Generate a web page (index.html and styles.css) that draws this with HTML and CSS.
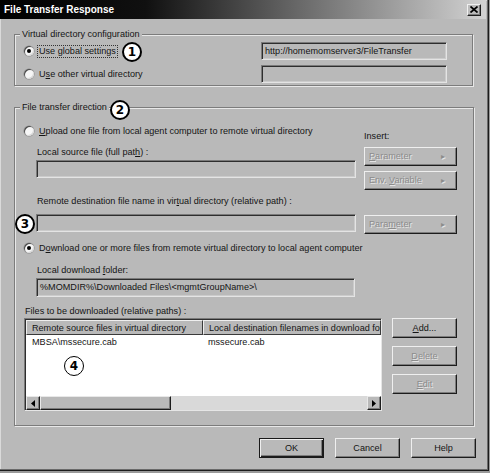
FILE: index.html
```html
<!DOCTYPE html>
<html>
<head>
<meta charset="utf-8">
<title>File Transfer Response</title>
<link rel="stylesheet" href="styles.css">
</head>
<body>
<div class="window">
  <div class="titlebar">
    <span class="title">File Transfer Response</span>
    <span class="close"><svg width="8" height="7" viewBox="0 0 8 7"><path d="M0.5 0.5 L7.5 6.5 M7.5 0.5 L0.5 6.5" stroke="#000" stroke-width="1.7"/></svg></span>
  </div>
  <div class="content">
    <fieldset class="group g1">
      <legend>Virtual directory configuration</legend>
      <div class="g1grid">
        <label class="radio checked"><span class="dot"></span><span class="focus">Use global settings</span></label>
        <div class="field">http://homemomserver3/FileTransfer</div>
        <label class="radio"><span class="dot"></span><span>U<u>s</u>e other virtual directory</span></label>
        <div class="field"></div>
      </div>
    </fieldset>

    <fieldset class="group g2">
      <legend>File transfer direction</legend>
      <div class="upper">
        <div class="leftcol">
          <label class="radio"><span class="dot"></span><span><u>U</u>pload one file from local agent computer to remote virtual directory</span></label>
          <div class="lbl l1">Local source file (full pat<u>h</u>) :</div>
          <div class="field f320"></div>
          <div class="lbl l2">Remote destination file name in vir<u>t</u>ual directory (relative path) :</div>
          <div class="field f320 f2"></div>
        </div>
        <div class="rightcol">
          <div class="lbl ins">Insert:</div>
          <div class="btn dis side p1"><span><u>P</u>arameter</span><span class="tri">&#9656;</span></div>
          <div class="btn dis side p2"><span>Env. <u>V</u>ariable</span><span class="tri">&#9656;</span></div>
          <div class="btn dis side p3"><span>Para<u>m</u>eter</span><span class="tri">&#9656;</span></div>
        </div>
      </div>
      <label class="radio checked dl"><span class="dot"></span><span>D<u>o</u>wnload one or more files from remote virtual directory to local agent computer</span></label>
      <div class="lbl l3">Local download <u>f</u>older:</div>
      <div class="field f319">%MOMDIR%\Downloaded Files\&lt;mgmtGroupName&gt;\</div>
      <div class="lbl l4">Files to be downloaded (relative paths) :</div>
      <div class="listrow">
        <div class="list">
          <div class="lhead">
            <div class="hc c1">Remote source files in virtual directory</div>
            <div class="hc c2">Local destination filenames in download folder</div>
          </div>
          <div class="lbody">
            <div class="lr"><span class="c1">MBSA\mssecure.cab</span><span class="c2">mssecure.cab</span></div>
          </div>
          <div class="hscroll">
            <span class="sarrow"><svg width="4" height="7" viewBox="0 0 4 7"><path d="M4 0 L0 3.5 L4 7 Z" fill="#000"/></svg></span>
            <span class="thumb"></span>
            <span class="track"></span>
            <span class="sarrow"><svg width="4" height="7" viewBox="0 0 4 7"><path d="M0 0 L4 3.5 L0 7 Z" fill="#000"/></svg></span>
          </div>
        </div>
        <div class="sidebtns">
          <div class="btn act"><span><u>A</u>dd...</span></div>
          <div class="btn dis"><span><u>D</u>elete</span></div>
          <div class="btn dis"><span><u>E</u>dit</span></div>
        </div>
      </div>
    </fieldset>

    <div class="footer">
      <div class="btn dflt">OK</div>
      <div class="btn">Cancel</div>
      <div class="btn">Help</div>
    </div>
  </div>

  <span class="callout k1">1</span>
  <span class="callout k2">2</span>
  <span class="callout k3">3</span>
  <span class="callout k4">4</span>
</div>
</body>
</html>
```

FILE: styles.css
```css
* { box-sizing: border-box; }
html, body { margin: 0; padding: 0; }
body {
  width: 490px;
  height: 473px;
  overflow: hidden;
  background: #9a9a9a;
  font-family: "Liberation Sans", Arial, sans-serif;
  font-size: 9.1px;
  line-height: 11px;
  color: #141414;
}
u { text-decoration: underline; text-underline-offset: 1px; }

.window {
  position: relative;
  width: 489px;
  height: 471px;
  background: #b9b9b9;
  box-shadow: inset -1px -1px 0 #1c1c1c, inset -2px -2px 0 #6a6a6a, inset 1px 1px 0 #dadada;
}

.titlebar {
  height: 19px;
  margin-right: 3px;
  padding: 0 5px 0 4px;
  display: flex;
  align-items: center;
  justify-content: space-between;
  background: linear-gradient(to right, #000 0%, #101010 30%, #6a6a6a 62%, #d2d2d2 100%);
}
.title {
  color: #fff;
  font-weight: bold;
  font-size: 10px;
}
.close {
  width: 14px;
  height: 12px;
  display: flex;
  align-items: center;
  justify-content: center;
  background: #bcbcbc;
  border: 1px solid;
  border-color: #f0f0f0 #1e1e1e #1e1e1e #f0f0f0;
  box-shadow: inset -1px -1px 0 #7a7a7a;
}

.content {
  padding: 10px 0 0 14px;
}

.group {
  margin: 0;
  border: 1px solid #7c7c7c;
  box-shadow: 1px 1px 0 #e8e8e8, inset 1px 1px 0 #e8e8e8;
  min-width: 0;
}
.group legend {
  padding: 0 2px;
  margin-left: -4px;
  background: #b9b9b9;
  line-height: 11px;
}

.g1 {
  width: 459px;
  padding: 2px 25px 2px 9px;
}
.g1grid {
  display: grid;
  grid-template-columns: 1fr 186px;
  row-gap: 5px;
  align-items: center;
}

.radio {
  display: flex;
  align-items: center;
  gap: 5px;
  height: 12px;
  white-space: nowrap;
}
.dot {
  position: relative;
  flex: none;
  width: 10px;
  height: 10px;
  border-radius: 50%;
  background: #f6f6f6;
  box-shadow: inset 1px 1px 0 #4a4a4a, inset -1px -1px 0 #d8d8d8, 0 0 0 0.5px #8a8a8a;
}
.radio.checked .dot::after {
  content: "";
  position: absolute;
  left: 3px;
  top: 3px;
  width: 4px;
  height: 4px;
  border-radius: 50%;
  background: #000;
}
.focus {
  outline: 1px dotted #333;
  outline-offset: 0;
  padding: 0 1px;
  margin-left: -1px;
}

.field {
  height: 18px;
  padding: 3px 3px 0;
  background: #b9b9b9;
  border: 1px solid;
  border-color: #7a7a7a #e4e4e4 #e4e4e4 #7a7a7a;
  box-shadow: inset 1px 1px 0 #2e2e2e, inset -1px -1px 0 #cbcbcb;
  white-space: nowrap;
  overflow: hidden;
}

.g2 {
  width: 460px;
  margin-top: 16px;
  padding: 12px 16px 14px 9px;
}
.upper {
  display: flex;
  align-items: flex-start;
}
.leftcol {
  width: 332px;
  display: flex;
  flex-direction: column;
}
.rightcol {
  width: 93px;
  margin-left: 8px;
  display: flex;
  flex-direction: column;
}
.lbl { white-space: nowrap; }
.l1 { margin: 10px 0 2px 13px; }
.f320 { width: 320px; margin-left: 12px; }
.l2 { margin: 18px 0 7px 13px; }
.ins { margin-top: 6px; }

.btn {
  height: 20px;
  display: flex;
  align-items: center;
  justify-content: center;
  background: #b9b9b9;
  border: 1px solid;
  border-color: #efefef #1c1c1c #1c1c1c #efefef;
  box-shadow: inset -1px -1px 0 #7c7c7c;
  white-space: nowrap;
}
.btn.dis { color: #8c8c8c; text-shadow: 1px 1px 0 #e6e6e6; }
.btn.side {
  height: 19px;
  justify-content: space-between;
  padding: 0 11px 0 4px;
}
.tri { font-size: 8px; }
.p1 { margin-top: 5px; }
.p2 { margin-top: 5px; }
.p3 { margin-top: 25px; }

.dl { margin-top: 8px; }
.l3 { margin: 11px 0 2px 13px; }
.f319 { width: 319px; height: 19px; margin-left: 12px; padding-top: 3px; }
.l4 { margin: 9px 0 1px 1px; }

.listrow {
  display: flex;
  align-items: flex-start;
  gap: 10px;
}
.list {
  width: 358px;
  height: 93px;
  display: flex;
  flex-direction: column;
  background: #fff;
  border: 1px solid;
  border-color: #7a7a7a #e6e6e6 #e6e6e6 #7a7a7a;
  box-shadow: inset 1px 1px 0 #2e2e2e;
  padding: 1px 0 0 1px;
  overflow: hidden;
}
.lhead {
  display: flex;
  height: 15px;
  flex: none;
}
.hc {
  height: 15px;
  padding: 2px 0 0 5px;
  background: #b9b9b9;
  border: 1px solid;
  border-color: #efefef #3a3a3a #3a3a3a #efefef;
  white-space: nowrap;
  overflow: hidden;
}
.hc.c1 { width: 177px; flex: none; }
.hc.c2 { flex: 1; }
.lbody {
  flex: 1;
  padding-top: 2px;
}
.lr { display: flex; }
.lr .c1 { width: 177px; padding-left: 6px; }
.lr .c2 { padding-left: 5px; }

.hscroll {
  display: flex;
  height: 14px;
  flex: none;
}
.sarrow {
  width: 14px;
  height: 14px;
  flex: none;
  display: flex;
  align-items: center;
  justify-content: center;
  background: #b9b9b9;
  border: 1px solid;
  border-color: #e8e8e8 #1c1c1c #1c1c1c #e8e8e8;
  box-shadow: inset -1px -1px 0 #7a7a7a;
}
.thumb {
  width: 131px;
  flex: none;
  background: #b9b9b9;
  border: 1px solid;
  border-color: #e8e8e8 #1c1c1c #1c1c1c #e8e8e8;
  box-shadow: inset -1px -1px 0 #7a7a7a;
}
.track {
  flex: 1;
  background: #d9d9d9;
}

.sidebtns {
  width: 65px;
  display: flex;
  flex-direction: column;
  gap: 8px;
}

.footer {
  display: flex;
  justify-content: flex-end;
  gap: 11px;
  margin-top: 12px;
  padding-right: 13px;
}
.footer .btn { width: 65px; }
.btn.dflt {
  border-color: #1a1a1a;
  box-shadow: inset 1px 1px 0 #efefef, inset -1px -1px 0 #1c1c1c, inset -2px -2px 0 #7c7c7c;
}

.callout {
  position: absolute;
  width: 20px;
  height: 20px;
  border-radius: 50%;
  background: #fff;
  border: 2px solid #000;
  display: flex;
  align-items: center;
  justify-content: center;
  font-family: "DejaVu Sans", "Liberation Sans", sans-serif;
  font-weight: bold;
  font-size: 12px;
  color: #000;
}
.k1 { left: 122px; top: 42px; }
.k2 { left: 110px; top: 100px; }
.k3 { left: 15px; top: 214px; }
.k4 { left: 64px; top: 356px; border-width: 1.6px; }
```
